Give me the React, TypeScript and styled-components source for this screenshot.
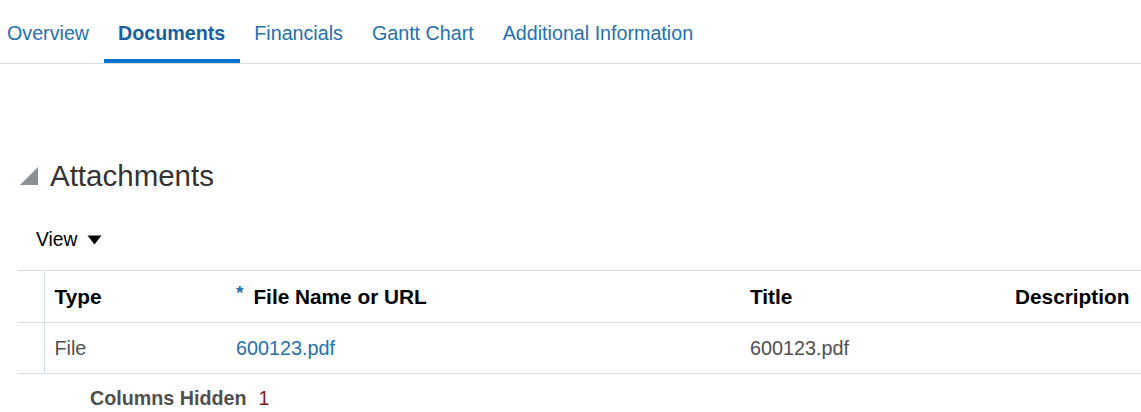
import styled, { createGlobalStyle } from 'styled-components';

const GlobalStyle = createGlobalStyle`
  html, body {
    margin: 0;
    padding: 0;
    background: #fff;
    overflow: hidden;
  }
  body {
    font-family: "Liberation Sans", Arial, sans-serif;
  }
`;

const Page = styled.div`
  width: 1141px;
  height: 412px;
  overflow: hidden;
`;

const TabBar = styled.div`
  display: flex;
  height: 63px;
  border-bottom: 1px solid #d6dfe6;
  margin-left: -7.5px;
`;

const Tab = styled.div<{ $active?: boolean }>`
  display: flex;
  align-items: center;
  box-sizing: border-box;
  height: 63px;
  padding: 4px 14.5px 0;
  font-size: 19.7px;
  font-weight: ${(p) => (p.$active ? 700 : 400)};
  color: ${(p) => (p.$active ? '#15609f' : '#2470b0')};
  position: relative;
  white-space: nowrap;

  &::after {
    content: '';
    display: ${(p) => (p.$active ? 'block' : 'none')};
    position: absolute;
    left: 0;
    right: 0;
    bottom: 0;
    height: 4px;
    background: #0572ce;
  }
`;

const Section = styled.section`
  padding: 92px 0 0 18px;
`;

const SectionHeader = styled.div`
  display: flex;
  align-items: center;
  gap: 12px;
  height: 40px;
  padding-left: 2px;
`;

const SectionTitle = styled.h2`
  margin: 0;
  font-size: 29.5px;
  font-weight: 400;
  color: #333;
`;

const Toolbar = styled.div`
  display: flex;
  align-items: center;
  gap: 10px;
  height: 30px;
  margin-top: 29px;
  padding-left: 18px;
  font-size: 19.3px;
  color: #000;
`;

const TableWrap = styled.div`
  margin-top: 15px;
  width: 1200px;
`;

const Table = styled.table`
  width: 100%;
  table-layout: fixed;
  border-collapse: collapse;
  border-top: 1px solid #d6dfe6;
`;

const Row = styled.tr<{ $header?: boolean }>`
  height: ${(p) => (p.$header ? '52px' : '51px')};
  border-bottom: 1px solid #d6dfe6;
`;

const Cell = styled.td<{ $header?: boolean; $gutter?: boolean }>`
  padding: 0 10px;
  font-size: ${(p) => (p.$header ? '20.8px' : '19.8px')};
  font-weight: ${(p) => (p.$header ? 700 : 400)};
  color: ${(p) => (p.$header ? '#000' : '#4f4f4f')};
  border-right: ${(p) => (p.$gutter ? '1px solid #d6dfe6' : 'none')};
  white-space: nowrap;
  vertical-align: middle;
  text-align: left;
`;

const Required = styled.span`
  color: #2470b0;
  font-size: 19px;
  position: relative;
  top: -5px;
  margin-left: 1px;
  margin-right: 10px;
`;

const FileLink = styled.a`
  color: #2470b0;
  text-decoration: none;
  margin-left: 1px;
`;

const Footer = styled.div`
  display: flex;
  align-items: center;
  gap: 12px;
  height: 48px;
  padding-left: 72px;
  font-size: 19.7px;
`;

const FooterLabel = styled.span`
  font-weight: 700;
  color: #4f4f4f;
`;

const FooterCount = styled.span`
  color: #7a1a1a;
`;

const tabs = ['Overview', 'Documents', 'Financials', 'Gantt Chart', 'Additional Information'];

const columns = [
  { width: 26, label: '' },
  { width: 181, label: 'Type' },
  { width: 515, label: 'File Name or URL', required: true },
  { width: 265, label: 'Title' },
  { width: 213, label: 'Description' },
];

const App = () => {
  return (
    <Page>
      <GlobalStyle />
      <TabBar>
        {tabs.map((t) => (
          <Tab key={t} $active={t === 'Documents'}>
            {t}
          </Tab>
        ))}
      </TabBar>

      <Section>
        <SectionHeader>
          <svg width="18" height="18" viewBox="0 0 18 18">
            <polygon points="0,18 18,18 18,0" fill="#8b9095" />
          </svg>
          <SectionTitle>Attachments</SectionTitle>
        </SectionHeader>

        <Toolbar>
          View
          <svg width="15" height="10" viewBox="0 0 15 10">
            <polygon points="0.5,0.5 14.5,0.5 7.5,9.5" fill="#000" />
          </svg>
        </Toolbar>

        <TableWrap>
          <Table>
            <colgroup>
              {columns.map((c, i) => (
                <col key={i} style={{ width: c.width }} />
              ))}
            </colgroup>
            <thead>
              <Row $header>
                {columns.map((c, i) => (
                  <Cell as="th" key={i} $header $gutter={i === 0}>
                    {c.required && <Required>*</Required>}
                    {c.label}
                  </Cell>
                ))}
              </Row>
            </thead>
            <tbody>
              <Row>
                <Cell $gutter />
                <Cell>File</Cell>
                <Cell>
                  <FileLink href="#">600123.pdf</FileLink>
                </Cell>
                <Cell>600123.pdf</Cell>
                <Cell />
              </Row>
            </tbody>
          </Table>
        </TableWrap>

        <Footer>
          <FooterLabel>Columns Hidden</FooterLabel>
          <FooterCount>1</FooterCount>
        </Footer>
      </Section>
    </Page>
  );
};

export default App;
